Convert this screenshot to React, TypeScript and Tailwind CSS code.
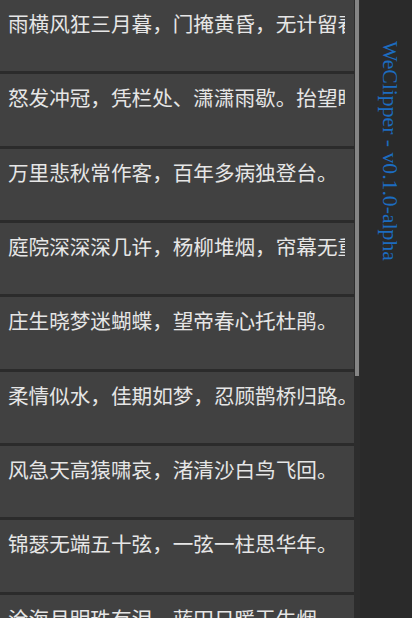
const lines = [
  "雨横风狂三月暮，门掩黄昏，无计留春住。",
  "怒发冲冠，凭栏处、潇潇雨歇。抬望眼，仰天长啸。",
  "万里悲秋常作客，百年多病独登台。",
  "庭院深深深几许，杨柳堆烟，帘幕无重数。",
  "庄生晓梦迷蝴蝶，望帝春心托杜鹃。",
  "柔情似水，佳期如梦，忍顾鹊桥归路。",
  "风急天高猿啸哀，渚清沙白鸟飞回。",
  "锦瑟无端五十弦，一弦一柱思华年。",
  "沧海月明珠有泪，蓝田日暖玉生烟。",
];

export default function App() {
  return (
    <div className="flex h-[618px] w-[412px] overflow-hidden bg-[#2b2b2b]">
      {/* Clip list */}
      <div className="flex w-[354px] shrink-0 flex-col gap-[3px] overflow-hidden">
        {lines.map((text) => (
          <div
            key={text}
            className="h-[71.33px] shrink-0 overflow-hidden whitespace-nowrap bg-[#414141] pl-[8px] pr-[9px] pt-[9px]"
          >
            <p
              className="overflow-hidden text-[20.6px] leading-[28px] text-[#e6e6e6]"
              style={{ fontFamily: '"Noto Sans CJK SC", "Noto Sans", sans-serif' }}
            >
              {text}
            </p>
          </div>
        ))}
      </div>

      {/* Scrollbar */}
      <div className="flex w-[6px] shrink-0 justify-center bg-[#2d2d2d]">
        <div className="h-[376px] w-[4px] bg-[#858585]" />
      </div>

      {/* Sidebar */}
      <div className="flex flex-1 justify-center bg-[#2a2a2a] pl-[8px] pt-[41px]">
        <span
          className="text-[21.7px] leading-[24px] text-[#1c6cc0] [writing-mode:vertical-rl]"
          style={{ fontFamily: '"Liberation Serif", serif' }}
        >
          WeClipper - v0.1.0-alpha
        </span>
      </div>
    </div>
  );
}
